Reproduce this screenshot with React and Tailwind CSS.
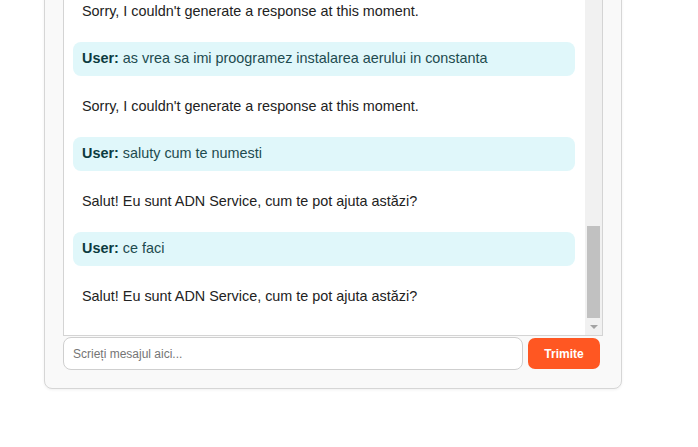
import { useEffect, useRef, useState } from 'react';

const initialMessages = [
  { from: 'bot', text: 'Bună! Sunt asistentul ADN Service. Cu ce te pot ajuta?' },
  { from: 'user', text: 'salut' },
  { from: 'bot', text: 'Salut! Eu sunt ADN Service, cum te pot ajuta astăzi?' },
  { from: 'user', text: 'cat costa montajul unui aer conditionat' },
  { from: 'bot', text: "Sorry, I couldn't generate a response at this moment." },
  { from: 'user', text: 'aveti program si sambata?' },
  { from: 'bot', text: "Sorry, I couldn't generate a response at this moment." },
  { from: 'user', text: 'vreau o revizie la centrala' },
  { from: 'bot', text: "Sorry, I couldn't generate a response at this moment." },
  { from: 'user', text: 'as vrea sa imi proogramez instalarea aerului in constanta' },
  { from: 'bot', text: "Sorry, I couldn't generate a response at this moment." },
  { from: 'user', text: 'as vrea sa imi proogramez instalarea aerului in constanta' },
  { from: 'bot', text: "Sorry, I couldn't generate a response at this moment." },
  { from: 'user', text: 'saluty cum te numesti' },
  { from: 'bot', text: 'Salut! Eu sunt ADN Service, cum te pot ajuta astăzi?' },
  { from: 'user', text: 'ce faci' },
  { from: 'bot', text: 'Salut! Eu sunt ADN Service, cum te pot ajuta astăzi?' },
];

function Message({ from, text }) {
  if (from === 'user') {
    return (
      <div className="rounded-[8px] bg-[#e0f7fa] px-[9px] py-[8.5px] text-[14.4px] leading-[17px] text-[#1d4b4f]">
        <strong className="font-bold text-[#0c3b3f]">User:</strong> {text}
      </div>
    );
  }
  return (
    <div className="px-[9px] py-[8.5px] text-[14.4px] leading-[17px] text-[#222]">{text}</div>
  );
}

// classic scrollbar look, drawn beside the list
function ScrollRail() {
  return (
    <div className="flex w-[17px] shrink-0 flex-col bg-[#f1f1f1]">
      <div className="flex h-[17px] items-center justify-center">
        <div className="h-0 w-0 border-x-[4px] border-b-[4px] border-x-transparent border-b-[#a3a3a3]" />
      </div>
      <div className="flex flex-1 flex-col justify-end px-[2px]">
        <div className="h-[92px] bg-[#c1c1c1]" />
      </div>
      <div className="flex h-[17px] items-center justify-center">
        <div className="h-0 w-0 border-x-[4px] border-t-[4px] border-x-transparent border-t-[#a3a3a3]" />
      </div>
    </div>
  );
}

export default function App() {
  const [messages] = useState(initialMessages);
  const [draft, setDraft] = useState('');
  const listRef = useRef(null);

  useEffect(() => {
    // keep the chat pinned to the latest message
    if (listRef.current) listRef.current.scrollTop = listRef.current.scrollHeight;
  }, [messages]);

  return (
    <div
      className="flex h-[447px] flex-col justify-end overflow-hidden bg-white pb-[58px]"
      style={{ fontFamily: '"Liberation Sans", Arial, sans-serif' }}
    >
      <div className="ml-[44px] w-[578px] shrink-0 rounded-[8px] border border-[#d6d6d6] bg-[#f9f9f9] px-[18px] pt-[18px] pb-[18px] shadow-[0_1px_3px_rgba(0,0,0,0.06)]">
        <h2 className="mb-[12px] text-[18px] font-bold text-[#333]">ADN Service Chat</h2>
        <div className="flex h-[420px] border border-[#d4d4d4] bg-white">
          <div
            ref={listRef}
            className="flex flex-1 flex-col gap-[13.5px] overflow-y-auto pt-[10px] pb-[22px] pl-[9px] pr-[10px] [scrollbar-width:none]"
          >
            {messages.map((m, i) => (
              <Message key={i} {...m} />
            ))}
          </div>
          <ScrollRail />
        </div>
        <div className="mt-px flex items-center gap-[5px]">
          <input
            value={draft}
            onChange={(e) => setDraft(e.target.value)}
            placeholder="Scrieți mesajul aici..."
            className="h-[33px] w-[460px] rounded-[8px] border border-[#cfcfcf] bg-white px-[9px] text-[12px] text-[#333] outline-none placeholder:text-[#757575]"
          />
          <button
            type="button"
            className="h-[31px] w-[72px] rounded-[7px] bg-[#ff5722] text-[12px] font-bold text-white"
          >
            Trimite
          </button>
        </div>
      </div>
    </div>
  );
}
